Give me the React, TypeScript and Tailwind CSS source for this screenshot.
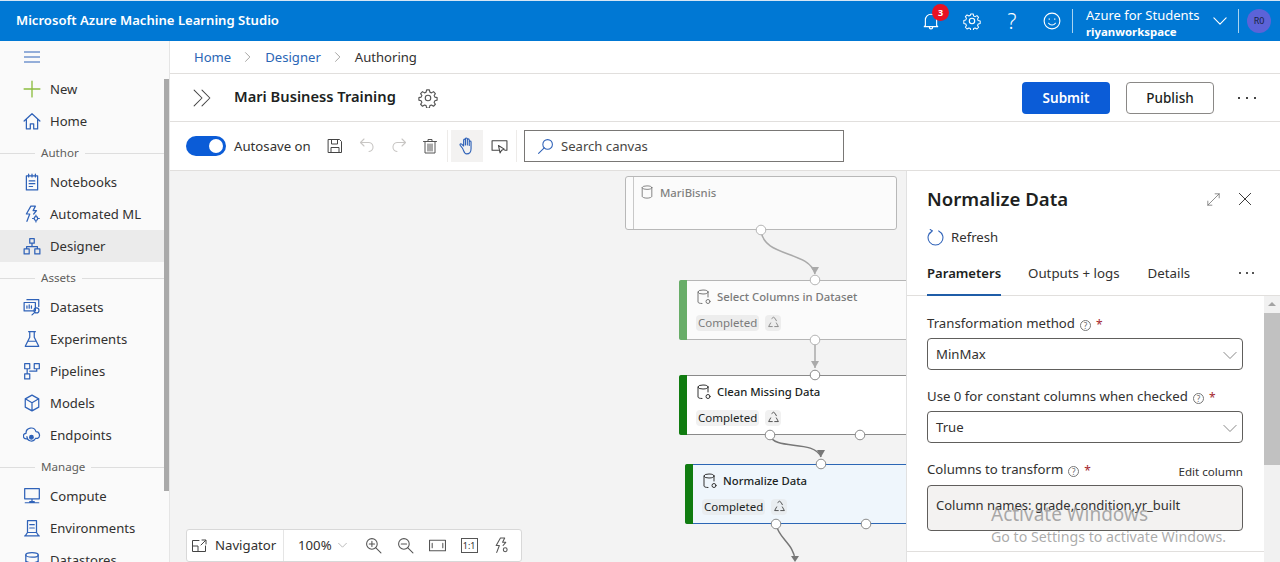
import React from "react";

const S = ({ children, size = 18, color = "#2f62b8", w = 1.1, vb = 16, className = "" }: any) => (
  <svg width={size} height={size} viewBox={`0 0 ${vb} ${vb}`} fill="none" stroke={color} strokeWidth={w} strokeLinecap="round" strokeLinejoin="round" className={`shrink-0 ${className}`}>
    {children}
  </svg>
);

const icons: Record<string, React.ReactNode> = {
  new: <S color="#8cbd3f" size={18} w={1.2}><path d="M8 1v14M1 8h14" /></S>,
  home: <S><path d="M1 8l7-6.5L15 8M3 6.5V15h3.5v-4.5h3V15H13V6.500" /></S>,
  notebooks: <S><path d="M3 2.500h10V15H3zM5 1v2.500M8 1v2.500M11 1v2.500M5.500 7h5M5.500 9.500h5M5.500 12h3" /></S>,
  automl: <S><path d="M7 1L3 8h3l-2.500 6.500M7 1h4L9 5h3L9.500 8" /><circle cx="11.500" cy="12" r="1.600" /><path d="M11.500 9v1M11.500 14v1M8.500 12h1M13.500 12h1" /></S>,
  designer: <S><path d="M6 1.500h4v4H6zM1 10.500h4.500V15H1zM10.500 10.500H15V15h-4.500zM8 5.500v3M3.200 10.500v-2h9.600v2" /></S>,
  datasets: <S><path d="M3.500 1.500H14v6M1 4h10v7.500H1zM3.500 9V7M5.500 9V6M7.500 9V7" /><circle cx="12" cy="11" r="2.200" /><path d="M10.500 12.800L8 15" /></S>,
  experiments: <S><path d="M5 1.500h6M6 1.500v5L2 14.500h12l-4-8v-5M4.500 10h7" /></S>,
  pipelines: <S><path d="M1.500 1.500h4.500v4.500H1.500zM10 1.500h4.500v4.500H10zM1.500 10.500H6V15H1.500zM3.700 6v4.500M12.200 6v2.200H6" /></S>,
  models: <S><path d="M8 1l6 3.300v7.400L8 15l-6-3.300V4.300zM2 4.300L8 7.800l6-3.500M8 7.800V15" /></S>,
  endpoints: <S><path d="M4 11.500H3a2.500 2.500 0 0 1-.3-5A4.500 4.500 0 0 1 11.500 5a3.200 3.200 0 0 1 1.500 6h-2" /><path d="M3.500 9.500a4 4 0 0 0 7 2.500" /><circle cx="7.500" cy="10" r="1.600" fill="#2f62b8" /></S>,
  compute: <S><path d="M1.500 1.500h13v9h-13zM8 10.500V13M2 14h12M6 13h4" /></S>,
  environments: <S><path d="M4 1.500h8v10.500H4zM6 5h4M6 8h4M2 15l2-3h8l2 3zM1.500 15h13" /></S>,
  datastores: <S><ellipse cx="8" cy="3.500" rx="5.500" ry="2" /><path d="M2.500 3.500v10c0 1 2.500 2 5.500 2s5.500-1 5.500-2v-10M2.500 8.500c0 1 2.500 2 5.500 2s5.500-1 5.500-2" /></S>,
};

const rows: any[] = [
  ["new", "New"], ["home", "Home"], "Author",
  ["notebooks", "Notebooks"], ["automl", "Automated ML"], ["designer", "Designer", true], "Assets",
  ["datasets", "Datasets"], ["experiments", "Experiments"], ["pipelines", "Pipelines"], ["models", "Models"], ["endpoints", "Endpoints"], "Manage",
  ["compute", "Compute"], ["environments", "Environments"], ["datastores", "Datastores"],
];

function Sidebar() {
  return (
    <aside className="relative w-[170px] shrink-0 overflow-hidden bg-[#fafafa] border-r border-[#e5e5e5] text-[13.1px] text-[#323130]">
      <div className="h-8 flex items-center pl-[24px]">
        <S size={16} w={1}><path d="M0 3h16M0 8h16M0 13h16" /></S>
      </div>
      <div className="pr-[5px]">
        {rows.map((r) =>
          typeof r === "string" ? (
            <div key={r} className="h-[29px] pt-[3px] flex items-center">
              <div className="w-[35px] h-px bg-[#dedede]" />
              <span className="px-[6px] text-[11.6px] text-[#605e5c]">{r}</span>
              <div className="flex-1 h-px bg-[#dedede]" />
            </div>
          ) : (
            <div key={r[0]} className={`h-8 flex items-center pl-[23px] gap-[9px] ${r[2] ? "bg-[#ebebeb]" : ""}`}>
              {icons[r[0]]}
              <span className="pt-[2px]">{r[1]}</span>
            </div>
          )
        )}
      </div>
      <div className="absolute right-0 top-[38px] w-[5px] h-[412px] bg-[#a9a9a9]" />
    </aside>
  );
}

function Header() {
  return (
    <header className="h-[41px] shrink-0 bg-[#0078d4] border-t border-[#d5e6f5] flex items-center text-white">
      <div className="pl-[16px] text-[13.1px] font-semibold">Microsoft Azure Machine Learning Studio</div>
      <div className="ml-auto flex items-center h-full">
        <div className="relative w-10 h-full flex items-center justify-center">
          <S color="#fff" size={18} w={1}><path d="M3 12V7a5 5 0 0 1 10 0v5l1 1H2zM6.500 13.500a1.500 1.500 0 0 0 3 0" /></S>
          <div className="absolute left-[21px] top-[3px] w-[17px] h-[17px] rounded-full bg-[#e81123] flex items-center justify-center text-[9px] font-bold">3</div>
        </div>
        <div className="w-10 flex justify-center pl-[2px]">
          <S color="#fff" size={18} w={1}><circle cx="8" cy="8" r="2.400" /><path d="M6.800 1h2.400l.4 2 1.500.7 1.800-1 1.600 1.700-1 1.700.6 1.500 2 .5v2.400l-2 .5-.6 1.500 1 1.700-1.600 1.700-1.800-1-1.500.6-.4 2H6.800l-.4-2-1.500-.6-1.800 1-1.600-1.700 1-1.700-.6-1.500-2-.5V7.400l2-.5.6-1.500-1-1.700 1.600-1.700 1.800 1 1.500-.7z" transform="translate(.8 .8) scale(.9)" /></S>
        </div>
        <div className="w-10 text-center pl-[2px] text-[21px] leading-none font-light">?</div>
        <div className="w-10 flex justify-center pl-[2px]">
          <S color="#fff" size={18} w={1}><circle cx="8" cy="8" r="7" /><path d="M5 10a3.600 3.600 0 0 0 6 0M5.500 6v.5M10.500 6v.5" /></S>
        </div>
        <div className="w-px h-6 bg-[#a8d3f0] ml-[1px]" />
        <div className="ml-[13px] w-[113px] leading-none pt-[3px]">
          <div className="text-[13px] leading-[17px] whitespace-nowrap">Azure for Students</div>
          <div className="text-[11.4px] leading-[15px] font-bold whitespace-nowrap">riyanworkspace</div>
        </div>
        <div className="ml-[14px] mr-[-1px]">
          <S color="#fff" size={14} w={1.3}><path d="M1 4.500l7 7 7-7" /></S>
        </div>
        <div className="w-px h-6 bg-[#a8d3f0] ml-[12px]" />
        <div className="ml-[8px] mr-[9px] w-6 h-6 rounded-full bg-[#5c63d8] flex items-center justify-center text-[9px] text-[#16213f]">R0</div>
      </div>
    </header>
  );
}

function Breadcrumb() {
  return (
    <div className="h-[33px] shrink-0 border-b border-[#e1dfdd] flex items-center pl-[24px] text-[13.1px] bg-white">
      <span className="pt-px text-[#2b66b5]">Home</span>
      <S size={10} color="#8a8886" w={1.2} className="mx-[12px]"><path d="M4 1l7 7-7 7" /></S>
      <span className="pt-px text-[#2b66b5]">Designer</span>
      <S size={10} color="#8a8886" w={1.2} className="mx-[12px]"><path d="M4 1l7 7-7 7" /></S>
      <span className="pt-px text-[#323130]">Authoring</span>
    </div>
  );
}

function TitleRow() {
  return (
    <div className="h-[48px] shrink-0 border-b border-[#e1dfdd] flex items-center bg-white pl-[23px] pr-[24px]">
      <S size={18} color="#444" w={0.9}><path d="M1 1l7 7-7 7M8 1l7 7-7 7" /></S>
      <h1 className="ml-[23px] pb-[2px] text-[14.7px] font-semibold text-[#201f1e]">Mari Business Training</h1>
      <S size={20} color="#555" w={0.9} className="ml-[22px]"><circle cx="8" cy="8" r="2.200" /><path d="M6.900 1.500h2.200l.4 1.800 1.300.6 1.600-1 1.500 1.600-1 1.500.6 1.300 1.800.4v2l-1.800.5-.6 1.300 1 1.500-1.500 1.600-1.600-1-1.300.5-.4 1.900H6.900l-.4-1.900-1.300-.5-1.600 1-1.500-1.600 1-1.500-.6-1.300-1.800-.5v-2l1.800-.4.6-1.300-1-1.500 1.500-1.600 1.600 1 1.300-.6z" /></S>
      <button className="ml-auto w-[88px] h-8 pt-[2px] rounded-sm bg-[#0b5cd7] text-white text-[13.5px] font-semibold">Submit</button>
      <button className="ml-4 w-[88px] h-8 pt-[2px] rounded-sm border border-[#8a8886] text-[#201f1e] text-[13.5px] font-medium">Publish</button>
      <span className="ml-[24px] w-[18px] flex justify-between">
        <i className="w-[2px] h-[2px] bg-[#444]" /><i className="w-[2px] h-[2px] bg-[#444]" /><i className="w-[2px] h-[2px] bg-[#444]" />
      </span>
    </div>
  );
}

function Toolbar() {
  return (
    <div className="h-[49px] shrink-0 border-b border-[#e1dfdd] flex items-center bg-white pl-[16px]">
      <div className="w-10 h-5 rounded-full bg-[#0b5cd7] flex items-center justify-end pr-[3px]">
        <div className="w-[14px] h-[14px] rounded-full bg-white" />
      </div>
      <span className="ml-2 pt-px w-[90px] text-[13.2px] text-[#323130]">Autosave on</span>
      <S size={16} color="#444" w={1} className="ml-[3px]"><path d="M1.500 1.500h11l2 2v11h-13zM4.500 1.500V6h6V1.500M4 14.500V9.500h8v5" /></S>
      <S size={16} color="#c8c6c4" w={1.1} className="ml-[16px]"><path d="M5 1L1.500 4.500 5 8M1.500 4.500H9a4.500 4.500 0 0 1 1 9" /></S>
      <S size={16} color="#c8c6c4" w={1.1} className="ml-[16px]"><path d="M11 1l3.500 3.500L11 8M14.500 4.500H7a4.500 4.500 0 0 0-1 9" /></S>
      <S size={16} color="#555" w={1} className="ml-[15px]"><path d="M1.500 3.500h13M6 3.500V1.500h4v2M3 3.500V15h10V3.500M6 6v7M8 6v7M10 6v7" /></S>
      <div className="w-px h-8 bg-[#edebe9] ml-[9px]" />
      <div className="ml-[3px] w-8 h-8 bg-[#f3f2f1] flex items-center justify-center">
        <S size={18} color="#2f62b8" w={1}><path d="M4 10L2 7.500c-.7-1 .5-2 1.300-1.200L5 8V2.800c0-1.200 1.600-1.200 1.600 0V7V1.800c0-1.200 1.700-1.200 1.700 0V7V2.600c0-1.200 1.700-1.200 1.700 0V7.500V4.400c0-1.100 1.600-1.100 1.600 0v6c0 3-1.800 4.600-4 4.600S5.500 13 4 10z" /></S>
      </div>
      <S size={17} color="#444" w={1} className="ml-[8px]"><path d="M7 11.500H1V2.500h14v9h-2M7 7l1.500 7 1.500-2.500 2.500-1z" /></S>
      <div className="w-px h-8 bg-[#edebe9] ml-[8px]" />
      <div className="ml-[7px] w-[320px] h-8 border border-[#797775] flex items-center pl-[12px] text-[13.1px] text-[#484644]">
        <S size={17} color="#2f62b8" w={1}><circle cx="10" cy="6" r="4.500" /><path d="M6.800 9.200L1.500 14.500" /></S>
        <span className="ml-[7px] pt-px">Search canvas</span>
      </div>
    </div>
  );
}

const Recycle = ({ color = "#555" }: any) => (
  <S size={13} color={color} w={1}><path d="M6 3L8 1.500 10 3l1.500 2.800M11.500 8.500L14 13H9.500M6.500 13H2l2.500-4.500" /></S>
);
const DataIcon = ({ color }: any) => (
  <S size={16} color={color} w={1}><ellipse cx="7" cy="3" rx="5" ry="2" /><path d="M2 3v10c0 .8 1.500 1.500 4 1.500M12 3v5" /><circle cx="12" cy="12.500" r="2" /></S>
);

function Node({ left, top, title, bar, text, chip, border, bg, icon, width = 260 }: any) {
  return (
    <div className={`absolute flex h-[60px] rounded-l-[3px] border ${border} ${bg}`} style={{ left, top, width }}>
      <div className="w-2 rounded-l-[2px] -my-px -ml-px shrink-0" style={{ background: bar }} />
      <div className="pl-[9px] pt-[8px]">
        <div className={`flex items-center text-[11.3px] font-medium ${text}`}>
          <DataIcon color={icon} />
          <span className="ml-[5px]">{title}</span>
        </div>
        <div className={`mt-[9px] flex items-center gap-[6px] text-[11.5px] ${text}`}>
          <span className={`px-[2px] h-4 rounded-sm flex items-center ${chip}`}>Completed</span>
          <span className={`w-4 h-4 rounded-sm flex items-center justify-center ${chip}`}><Recycle color={icon} /></span>
        </div>
      </div>
    </div>
  );
}

function Canvas() {
  const p = [
    [591, 59, "#b5b5b5"], [645, 109, "#b5b5b5"], [645, 169, "#b5b5b5"], [645, 204, "#8a8a8a"],
    [600, 264, "#8a8a8a"], [690, 264, "#8a8a8a"], [651, 293, "#8a8a8a"], [606, 353, "#8a8a8a"], [696, 353, "#8a8a8a"],
  ];
  return (
    <div className="relative flex-1 bg-[#f3f3f3] overflow-hidden">
      <div className="absolute left-[455px] top-[5px] w-[272px] h-[54px] rounded-[3px] border border-[#b8b8b8] bg-[#fbfbfb] flex">
        <div className="w-[8px] border-r border-[#c8c8c8] shrink-0" />
        <div className="flex items-start pl-[6px] pt-[8px] text-[11.3px] font-medium text-[#80807f]">
          <S size={14} color="#777" w={1}><ellipse cx="8" cy="3" rx="5.500" ry="2" /><path d="M2.500 3v10c0 1 2.500 2 5.500 2s5.500-1 5.500-2V3" /></S>
          <span className="ml-[6px]">MariBisnis</span>
        </div>
      </div>
      <Node left={509} top={109} width={260} title="Select Columns in Dataset" bar="#68ad68" text="text-[#7a7a7a]" chip="bg-[#ededed]" border="border-[#b5b5b5]" bg="bg-[#fbfbfb]" icon="#777" />
      <Node left={509} top={204} width={260} title="Clean Missing Data" bar="#107c10" text="text-[#201f1e]" chip="bg-[#f1f1f1]" border="border-[#8a8a8a]" bg="bg-white" icon="#333" />
      <Node left={515} top={293} width={260} title="Normalize Data" bar="#107c10" text="text-[#201f1e]" chip="bg-[#e9edf0]" border="border-[#2b66b5]" bg="bg-[#eff6fc]" icon="#333" />
      <svg className="absolute left-0 top-0" width="737" height="391" fill="none">
        <path d="M591 59c2 28 48 20 54 44" stroke="#aaa" strokeWidth="1.500" />
        <path d="M641 96h8l-4 7z" fill="#aaa" />
        <path d="M645 169v28" stroke="#aaa" strokeWidth="1.500" />
        <path d="M641 190h8l-4 7z" fill="#aaa" />
        <path d="M600 264c4 16 44 4 51 22" stroke="#777" strokeWidth="1.500" />
        <path d="M647 279h8l-4 7z" fill="#777" />
        <path d="M606 353c2 14 18 20 19 36" stroke="#777" strokeWidth="1.500" />
        <path d="M621 385h8l-4 6z" fill="#777" />
        {p.map(([x, y, c]: any) => (
          <circle key={`${x}-${y}`} cx={x} cy={y} r="4.800" fill="#fff" stroke={c} />
        ))}
      </svg>
      <div className="absolute left-[16px] top-[358px] w-[336px] h-[33px] bg-white border border-[#d8d8d8] rounded-[3px] flex items-center text-[13.2px] text-[#323130]">
        <S size={16} color="#444" w={1} className="ml-[4px]"><path d="M8 2.500H1.500v11h13V8M1.500 8H7v5.500M10 7l4.500-4.500M11 2h4v4" /></S>
        <span className="ml-[8px] w-[68px]">Navigator</span>
        <div className="w-px h-full bg-[#e5e5e5]" />
        <span className="ml-[14px]">100%</span>
        <S size={9} color="#b0b0b0" w={1.5} className="ml-[6px]"><path d="M1 4l7 7 7-7" /></S>
        <S size={17} color="#555" w={1} className="ml-[18px]"><circle cx="6.500" cy="6.500" r="5" /><path d="M10 10l5 5M4 6.500h5M6.500 4v5" /></S>
        <S size={17} color="#555" w={1} className="ml-[15px]"><circle cx="6.500" cy="6.500" r="5" /><path d="M10 10l5 5M4 6.500h5" /></S>
        <S size={17} color="#555" w={1} className="ml-[15px]"><path d="M.5 3h15v10H.5zM3 6v4M13 6v4" /></S>
        <div className="ml-[15px] w-[17px] h-[15px] border border-[#555] text-[9px] leading-[13px] text-center">1:1</div>
        <S size={17} color="#555" w={1} className="ml-[15px]"><path d="M7 1L3 8h3l-2.500 6.500M7 1h4L9 5h3L9.500 8" /><circle cx="11.500" cy="12" r="1.800" /></S>
      </div>
    </div>
  );
}

const Help = () => (
  <span className="ml-[5px] mb-[3px] inline-flex w-[11px] h-[11px] rounded-full border border-[#777] text-[8px] leading-none items-center justify-center text-[#666]">?</span>
);
const Star = () => <span className="ml-[5px] text-[#a4262c] text-[12px]">*</span>;
const Chev = () => (
  <S size={14} color="#777" w={1} className="mr-[5px]"><path d="M1 5l7 7 7-7" /></S>
);

function Panel() {
  return (
    <section className="relative w-[374px] shrink-0 bg-white border-l border-[#e1e1e1] text-[#323130] flex flex-col overflow-hidden">
      <div className="flex items-center pl-[20px] pr-[28px] pt-[13px] h-[43px]">
        <h2 className="text-[18.6px] font-semibold text-[#201f1e]">Normalize Data</h2>
        <S size={13} color="#666" w={0.9} className="ml-auto mt-px"><path d="M1 15L15 1M10 1h5v5M1 10v5h5" /></S>
        <S size={14} color="#333" w={1.1} className="ml-[18px]"><path d="M1.500 1.500l13 13M14.500 1.500l-13 13" /></S>
      </div>
      <div className="flex items-center pl-[20px] h-[34px] mt-[6px] text-[13.2px]">
        <S size={17} color="#2f62b8" w={1}><path d="M5 1.800a7 7 0 1 0 6 0M5 1.800L2.800 4M5 1.800L3 .5" /></S>
        <span className="ml-[7px] pt-px">Refresh</span>
      </div>
      <div className="flex h-[42px] shrink-0 border-b border-[#e1dfdd] pl-[20px] text-[13.3px] relative">
        <div className="w-[74px] text-center text-[13.1px] font-semibold text-[#201f1e] border-b-2 border-[#1f5da8] h-[42px] -mb-px pt-[10px]">Parameters</div>
        <span className="ml-[27px] pt-[10px]">Outputs + logs</span>
        <span className="ml-[28px] pt-[10px]">Details</span>
        <span className="ml-[49px] mt-[18px] w-[15px] flex justify-between h-[2px]">
          <i className="w-[2px] h-[2px] bg-[#555]" /><i className="w-[2px] h-[2px] bg-[#555]" /><i className="w-[2px] h-[2px] bg-[#555]" />
        </span>
      </div>
      <div className="flex flex-1 min-h-0">
        <div className="flex-1 min-w-0 h-[256px] border-b border-[#e1dfdd] pl-[20px] pr-[21px] text-[13.2px]">
          <div className="h-[42px] flex items-end pb-[4px]">Transformation method<Help /><Star /></div>
          <div className="h-8 pt-px border border-[#605e5c] rounded-sm flex items-center justify-between pl-2">MinMax<Chev /></div>
          <div className="h-[41px] flex items-end pb-[4px]">Use 0 for constant columns when checked<Help /><Star /></div>
          <div className="h-8 pt-px border border-[#605e5c] rounded-sm flex items-center justify-between pl-2">True<Chev /></div>
          <div className="h-[42px] flex items-end pb-[5px]">Columns to transform<Help /><Star /><span className="ml-auto text-[11.6px]">Edit column</span></div>
          <div className="h-[46px] pb-[5px] border border-[#605e5c] rounded-sm bg-[#f3f2f1] flex items-center pl-2 text-[13px]">Column names: grade,condition,yr_built</div>
        </div>
        <div className="relative w-4 shrink-0 bg-[#f1f1f1]">
          <div className="absolute left-[4px] top-[6px] border-x-[4px] border-x-transparent border-b-[4px] border-b-[#a3a3a3]" />
          <div className="absolute left-0 top-[17px] w-full h-[152px] bg-[#c1c1c1]" />
        </div>
      </div>
      <div className="absolute left-[84px] top-[331px] text-[#8f8f8f]/75 pointer-events-none">
        <div className="text-[19px] leading-[24px]">Activate Windows</div>
        <div className="text-[14.2px] leading-[20px] mt-[1px]">Go to Settings to activate Windows.</div>
      </div>
    </section>
  );
}

export default function App() {
  return (
    <div className="h-[562px] w-[1280px] overflow-hidden flex flex-col bg-white font-['Noto_Sans','Open_Sans',sans-serif]">
      <Header />
      <div className="flex flex-1 min-h-0">
        <Sidebar />
        <main className="flex-1 min-w-0 flex flex-col">
          <Breadcrumb />
          <TitleRow />
          <Toolbar />
          <div className="flex flex-1 min-h-0">
            <Canvas />
            <Panel />
          </div>
        </main>
      </div>
    </div>
  );
}
